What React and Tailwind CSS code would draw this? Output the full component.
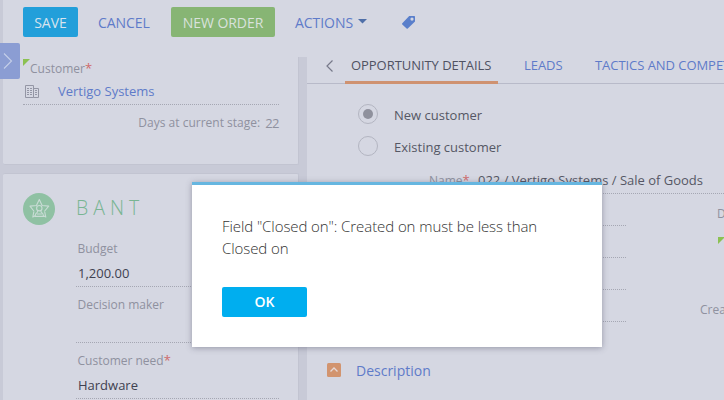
import React from "react";

function Required() {
  return <span className="text-[13px] leading-none text-[#cf6b6b]">*</span>;
}

function Corner({ className = "" }) {
  return (
    <svg className={"block h-[7px] w-[7px] shrink-0 " + className} viewBox="0 0 7 7">
      <path d="M0 0H7L0 7Z" fill="#8cc152" />
    </svg>
  );
}

function Toolbar() {
  return (
    <header className="ml-[3px] flex h-[57px] shrink-0 items-start bg-[#d5d7e2] pl-5 pt-[7px] text-[14px] leading-[32px] whitespace-nowrap">
      <button className="h-[30px] w-[55px] rounded-[2px] bg-[#229fda] text-[#d8e3ee]">SAVE</button>
      <button className="ml-5 w-[73px] text-left tracking-[-0.05px] text-[#5f7bc9]">CANCEL</button>
      <button className="h-[30px] w-[104px] rounded-[2px] bg-[#87b574] tracking-[-0.05px] text-[#d9e2dc]">NEW ORDER</button>
      <button className="ml-5 flex text-[#5f7bc9]">
        <span className="w-[63px] text-left tracking-[-0.05px]">ACTIONS</span>
        <svg className="mt-[12px] h-[5px] w-[9px]" viewBox="0 0 9 5"><path d="M0 0H9L4.5 4.5Z" fill="#4f6fa8" /></svg>
      </button>
      <svg className="ml-[35px] mt-[9px] h-[13px] w-[13px]" viewBox="0 0 13 13">
        <path fillRule="evenodd" d="M7.2 0H12.3Q13 0 13 .7V5.5L5.8 12.6Q5.2 13.1 4.6 12.6L.3 8.5Q-.2 7.9 .3 7.3ZM10 1.5A1.6 1.6 0 1 0 10 4.7A1.6 1.6 0 1 0 10 1.5Z" fill="#5a7fcb" />
      </svg>
    </header>
  );
}

function CustomerCard() {
  return (
    <section className="h-[108px] shrink-0 rounded-b-[2px] border-r border-b border-[#c2c4d1] bg-[#d5d7e2] pl-5 pr-[19px] pt-px">
      <div className="flex h-[23px] text-[12px] text-[#8f919f]">
        <Corner className="mt-px" />
        <span className="pt-px">Customer<Required /></span>
      </div>
      <div className="flex h-6 border-b border-dotted border-[#a5a7b3] text-[#5f7bc9]">
        <svg className="ml-[2px] mt-1 h-[13px] w-[14px]" viewBox="0 0 14 13" fill="none" stroke="#9496a5">
          <path d="M.5 .5H8.5V12.5H.5ZM8.5 3.5H13.5V12.5H8.5M2 3.5H4M5 3.5H7M2 5.5H4M5 5.5H7M2 7.5H4M5 7.5H7M2 9.5H4M5 9.5H7M10 5.5H12M10 7.5H12M10 9.5H12" />
        </svg>
        <span className="ml-[19px]">Vertigo Systems</span>
      </div>
      <div className="flex justify-end gap-[5px] pt-[8px] text-[#8f919f]">
        <span className="text-[12px]">Days at current stage:</span>
        <span className="tracking-[-0.5px]">22</span>
      </div>
    </section>
  );
}

function Field({ label, value, required }) {
  return (
    <div className="h-14 border-b border-dotted border-[#a5a7b3] pt-[8px]">
      <div className="h-6 pl-[1.5px] text-[12px] text-[#8f919f]">{label}{required && <Required />}</div>
      <div className="pl-[2px] text-[#3f4150]">{value}</div>
    </div>
  );
}

function BantCard() {
  return (
    <section className="mt-2 flex flex-1 rounded-t-[2px] border-t border-r border-[#c2c4d1] bg-[#d5d7e2] pl-5 pr-[19px]">
      <svg className="mt-[19px] h-8 w-8 shrink-0" viewBox="0 0 32 32">
        <circle cx="16" cy="16" r="16" fill="#8fc1a3" />
        <g fill="none" stroke="#c9dcd5" strokeWidth="1.1" strokeLinejoin="round">
          <path d="M11.2 18.5L7 13.1L13.4 12.5L16.3 6.5L19.1 12.5L25.7 13.1L21.3 18.5M10.8 18.8L9.8 24L12.2 22.8M21.7 18.8L22.8 24L20.4 22.8" />
          <circle cx="16.3" cy="15.2" r="2.7" />
          <path d="M14.8 17.7L14.3 19.3Q12.3 20.2 12 23.4H20.6Q20.3 20.2 18.3 19.3L17.8 17.7M13.8 21H18.8" />
        </g>
      </svg>
      <div className="ml-[21px] flex-1">
        <h2 className="h-[57px] pt-[20px] text-[19.5px] leading-7 font-light tracking-[5px] text-[#78b592]">BANT</h2>
        <Field label="Budget" value="1,200.00" />
        <Field label="Decision maker" value="" />
        <Field label="Customer need" value="Hardware" required />
      </div>
    </section>
  );
}

function Tabs() {
  return (
    <nav className="flex h-[27px] whitespace-nowrap border-b border-[#b8bac9] tracking-[-0.05px] text-[#5f7bc9]">
      <svg className="ml-[19px] mt-[3px] h-3 w-[7px] shrink-0" viewBox="0 0 7 12"><path d="M6.5 .5L1 6L6.5 11.5" fill="none" stroke="#77798a" strokeWidth="1.2" /></svg>
      <span className="ml-[12px] h-[27px] w-[153px] shrink-0 border-b-[3px] border-[#cf9271] pl-[6px] leading-[17px] text-[#505262]">OPPORTUNITY DETAILS</span>
      <span className="ml-[26px] w-[71px] shrink-0 leading-[17px]">LEADS</span>
      <span className="leading-[17px]">TACTICS AND COMPETITORS</span>
    </nav>
  );
}

function Radio({ label, checked }) {
  return (
    <label className="flex h-8">
      <span className="flex h-5 w-5 items-center justify-center rounded-full border border-[#b3b5c1]">
        {checked && <span className="h-[10px] w-[10px] rounded-full bg-[#8f919d]" />}
      </span>
      <span className="ml-4 pt-px text-[#555765]">{label}</span>
    </label>
  );
}

function Details() {
  return (
    <main className="ml-2 flex w-[417px] flex-col bg-[#d5d7e2]">
      <Tabs />
      <div className="pl-[51px] pt-5">
        <Radio label="New customer" checked />
        <Radio label="Existing customer" />
      </div>
      <div className="flex h-[26px] whitespace-nowrap pt-px">
        <span className="w-[171px] pl-[122px] pt-[2px] text-[12px] text-[#8f919f]">Name<Required /></span>
        <span className="flex-1 border-b border-dotted border-[#a5a7b3] pt-px text-[#555765]">022 / Vertigo Systems / Sale of Goods</span>
      </div>
      <div className="flex text-[12px] text-[#8f919f]">
        <div className="ml-[171px] w-[148px]">
          <div className="h-8 border-b border-dotted border-[#a5a7b3]" />
          <div className="h-8 border-b border-dotted border-[#a5a7b3]" />
          <div className="h-8 border-b border-dotted border-[#a5a7b3]" />
          <div className="h-8 border-b border-dotted border-[#a5a7b3]" />
        </div>
        <div className="w-[98px] overflow-hidden whitespace-nowrap">
          <div className="h-[43px] pl-[91px] pt-[10px]">Due date</div>
          <Corner className="ml-[92px]" />
          <div className="pl-[74px] pt-[56px]">Created on</div>
        </div>
      </div>
      <div className="-mt-px flex pl-5 pt-[38px] text-[14px] leading-5 text-[#5f7bc9]">
        <svg className="mt-[4px] h-[14px] w-[14px]" viewBox="0 0 14 14">
          <rect width="14" height="14" rx="1.5" fill="#d2946f" />
          <path d="M3.5 8.5L7 5L10.5 8.5" fill="none" stroke="#e5d9d8" strokeWidth="1.3" />
        </svg>
        <span className="ml-[15px] pt-[2px]">Description</span>
      </div>
    </main>
  );
}

export default function App() {
  return (
    <div className="relative flex h-[400px] w-[724px] flex-col overflow-hidden bg-[#c8cad7] font-['Open_Sans',sans-serif] text-[13px] leading-5">
      <Toolbar />
      <div className="flex flex-1">
        <aside className="ml-[3px] flex w-[296px] flex-col">
          <CustomerCard />
          <BantCard />
        </aside>
        <Details />
      </div>
      <button className="absolute left-0 top-[43px] flex h-9 w-5 items-center rounded-r-[2px] bg-[#8b9dd3] pl-[3px]">
        <svg className="h-4 w-[10px]" viewBox="0 0 10 16"><path d="M1 .5L8.5 8L1 15.5" fill="none" stroke="#c5cfe8" strokeWidth="1.1" /></svg>
      </button>
      <div role="dialog" className="absolute left-[192px] top-[182px] h-[165px] w-[410px] border-t-[3px] border-[#66b6e0] bg-white pl-[30px] pt-[30px] shadow-[0_1px_6px_rgba(70,72,95,0.45)]">
        <p className="h-[72px] w-[350px] text-[15px] leading-[22px] font-light tracking-[-0.08px] text-[#333]">Field "Closed on": Created on must be less than Closed on</p>
        <button className="h-[30px] w-[85px] rounded-[2px] bg-[#00aeef] text-[14px] font-semibold leading-[30px] text-white">OK</button>
      </div>
    </div>
  );
}
